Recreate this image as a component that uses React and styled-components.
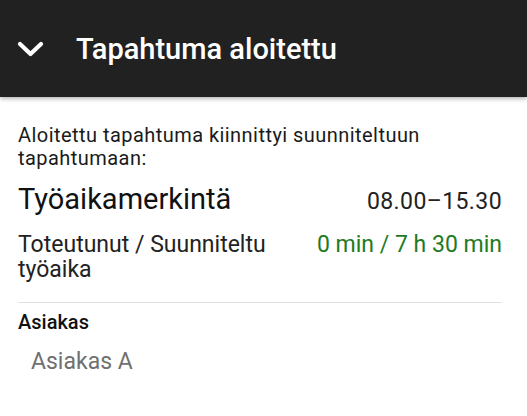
import React from 'react'
import styled, { createGlobalStyle } from 'styled-components'

const GlobalStyle = createGlobalStyle`
  html, body {
    margin: 0;
    padding: 0;
    background: #ffffff;
    font-family: Roboto, "Liberation Sans", Arial, sans-serif;
  }
`;

const Header = styled.header`
  height: 97px;
  background: #212121;
  display: flex;
  align-items: center;
  padding-left: 17px;
  gap: 32px;
  box-shadow: 0 2px 4px rgba(0, 0, 0, 0.28);
  position: relative;
  box-sizing: border-box;
`;

const HeaderTitle = styled.h1`
  margin: 0;
  color: #ffffff;
  font-size: 29px;
  font-weight: 500;
  line-height: 34px;
`;

const Content = styled.main`
  padding: 27px 25px 0 18px;
  color: #212121;
`;

const Intro = styled.p`
  margin: 0;
  font-size: 20px;
  line-height: 23px;
  letter-spacing: 0.45px;
  color: #1a1a1a;
`;

const EventRow = styled.div`
  display: flex;
  justify-content: space-between;
  align-items: baseline;
  margin-top: 12px;
`;

const EventName = styled.div`
  font-size: 29px;
  line-height: 34px;
  color: #111;
`;

const EventTime = styled.div`
  font-size: 23px;
  line-height: 26px;
  letter-spacing: 0.4px;
  color: #222;
`;

const TimeRow = styled.div`
  display: grid;
  grid-template-columns: 1fr auto;
  column-gap: 30px;
  margin-top: 16px;
  padding-bottom: 20px;
  border-bottom: 1px solid #e2e2e2;
`;

const TimeLabel = styled.div`
  font-size: 23px;
  line-height: 25px;
  color: #222;
`;

const TimeValue = styled.div`
  font-size: 23px;
  line-height: 25px;
  color: ${p => p.$tone || '#222'};
`;

const FieldLabel = styled.div`
  margin-top: 8px;
  font-size: 20px;
  line-height: 22px;
  font-weight: 500;
  color: #111;
`;

const FieldValue = styled.div`
  margin-top: 16px;
  padding-left: 13px;
  font-size: 23px;
  line-height: 26px;
  color: #707070;
`;

function Chevron() {
  return (
    <svg width="27" height="16" viewBox="0 0 27 16">
      <polyline
        points="3,3 13.5,13 24,3"
        fill="none"
        stroke="#ffffff"
        strokeWidth="4.2"
        strokeLinecap="round"
        strokeLinejoin="round"
      />
    </svg>
  )
}

export default function App() {
  return (
    <>
      <GlobalStyle />
      <Header>
        <Chevron />
        <HeaderTitle>Tapahtuma aloitettu</HeaderTitle>
      </Header>
      <Content>
        <Intro>Aloitettu tapahtuma kiinnittyi suunniteltuun tapahtumaan:</Intro>
        <EventRow>
          <EventName>Työaikamerkintä</EventName>
          <EventTime>08.00–15.30</EventTime>
        </EventRow>
        <TimeRow>
          <TimeLabel>Toteutunut / Suunniteltu työaika</TimeLabel>
          <TimeValue $tone="#1e7b1e">0 min / 7 h 30 min</TimeValue>
        </TimeRow>
        <FieldLabel>Asiakas</FieldLabel>
        <FieldValue>Asiakas A</FieldValue>
      </Content>
    </>
  )
}
